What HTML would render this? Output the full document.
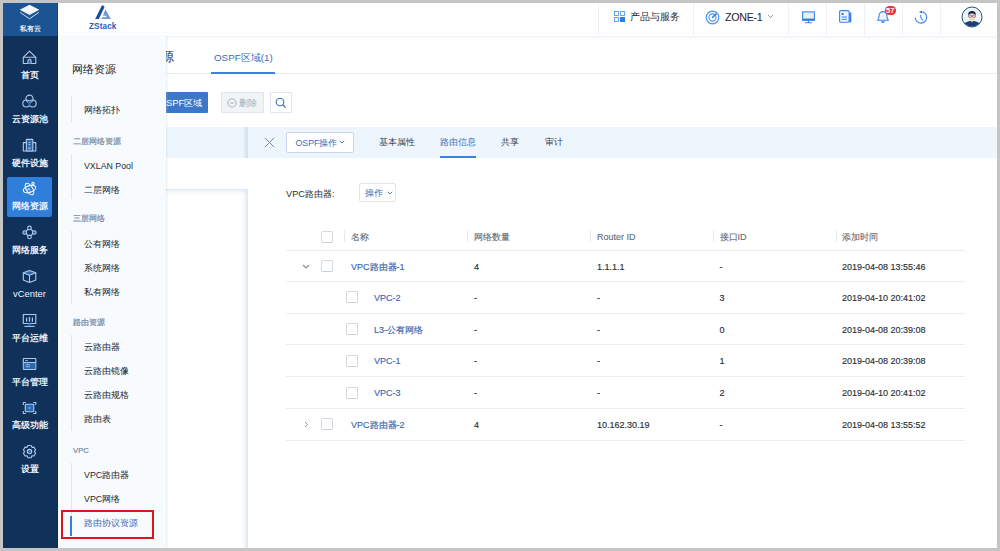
<!DOCTYPE html>
<html><head><meta charset="utf-8">
<style>
*{margin:0;padding:0;box-sizing:border-box}
html,body{width:1000px;height:551px;overflow:hidden;background:#c5c5c5;font-family:"Liberation Sans",sans-serif;font-weight:500}
.a{position:absolute}
.t{position:absolute;white-space:nowrap;line-height:12px;height:12px}
#frame{position:absolute;left:3px;top:3px;width:994px;height:545px;background:#fff;overflow:hidden}
/* all children of frame positioned relative to page via offset wrapper */
#pg{position:absolute;left:-3px;top:-3px;width:1000px;height:551px}
.sep{position:absolute;top:3px;width:1px;height:32px;background:#eef2f7}
.sb{position:absolute;left:2px;width:55px;font-weight:700;text-align:center;color:#e6eef8;font-size:8.6px;line-height:10px;height:10px}
.ico{position:absolute}
.fl{position:absolute;left:84px;font-size:9.2px;color:#232a35;line-height:12px;height:12px;white-space:nowrap}
.fg{position:absolute;left:73px;font-size:7.7px;color:#7588a0;-webkit-text-stroke:0.2px currentColor;margin-top:0.5px;line-height:10px;height:10px;white-space:nowrap}
.vl{position:absolute;left:71px;width:1px;background:#dfe6ee}
.hl{position:absolute;left:286px;width:679px;height:1px;background:#e9eef3}
.cb{position:absolute;width:12px;height:12px;border:1px solid #d3d9e0;border-bottom-color:#c9cfd7;border-radius:2px;background:#fff}
.th{position:absolute;font-size:9px;color:#626a75;-webkit-text-stroke:0.1px currentColor;line-height:12px;height:12px;white-space:nowrap}
.td{position:absolute;font-size:9px;color:#2b2f36;-webkit-text-stroke:0.15px currentColor;line-height:12px;height:12px;white-space:nowrap}
.lk{color:#3a68b0}
.csep{position:absolute;top:230px;width:1px;height:12px;background:#e3e8ee}
</style></head><body>
<div id="frame"><div id="pg">

<!-- header -->
<div class="a" style="left:58px;top:3px;width:942px;height:34px;background:#fff;border-bottom:1px solid #f1f3f6;box-shadow:0 1px 3px rgba(215,222,232,.3)"></div>
<div class="a" style="left:58px;top:31.5px;width:942px;height:1px;background:#fafbfc"></div>


<!-- logo -->
<svg class="a" style="left:94px;top:4px" width="18" height="16" viewBox="94 4 18 16">
 <path d="M101.1 6.9 C101.5 5.3 103.6 5 104.4 6.4 L104.3 7.4 L98.9 19.1 L95.2 19.1 Z" fill="#1a4f9c"/>
 <path d="M105.4 9.3 L110.9 19.1 L101.4 19.1 L102.2 17.2 L106.3 17.2 L106.3 15.8 L102.9 15.8 Z" fill="#6d9bd6"/>
</svg>
<div class="t" style="left:89px;top:20.5px;font-size:8.2px;font-weight:bold;color:#2360ac;letter-spacing:0.1px">ZStack</div>

<div class="sep" style="left:598px"></div>
<div class="sep" style="left:693px"></div>
<div class="sep" style="left:788px"></div>
<div class="sep" style="left:826px"></div>
<div class="sep" style="left:864px"></div>
<div class="sep" style="left:902px"></div>
<div class="sep" style="left:940px"></div>

<!-- products icon -->
<svg class="a" style="left:614px;top:11px" width="11" height="11" viewBox="0 0 11 11">
 <rect x="0.5" y="0.5" width="4" height="4" fill="none" stroke="#5b9be9" stroke-width="0.9"/>
 <rect x="6.5" y="0.5" width="4" height="4" fill="none" stroke="#5b9be9" stroke-width="0.9"/>
 <rect x="0.5" y="6.5" width="4" height="4" fill="none" stroke="#5b9be9" stroke-width="0.9"/>
 <rect x="6" y="6" width="5" height="5" fill="#2f7be0"/>
</svg>
<div class="t" style="left:630px;top:11px;font-size:10px;color:#2b2f36">产品与服务</div>
<!-- zone icon -->
<svg class="a" style="left:705px;top:9.5px" width="15" height="15" viewBox="0 0 15 15">
 <circle cx="7.5" cy="7.5" r="6.3" fill="none" stroke="#4a93ec" stroke-width="1.2"/>
 <circle cx="7.5" cy="7.5" r="3.6" fill="none" stroke="#4a93ec" stroke-width="1.1"/>
 <path d="M7.5 7.5 L11 4" stroke="#2f7be0" stroke-width="1.6" stroke-linecap="round"/>
</svg>
<div class="t" style="left:725px;top:10.5px;font-size:10.7px;letter-spacing:-0.3px;color:#1f2329">ZONE-1</div>
<svg class="a" style="left:767px;top:14px" width="7" height="5" viewBox="0 0 7 5"><path d="M1 1 L3.5 3.5 L6 1" fill="none" stroke="#8a929c" stroke-width="0.9"/></svg>
<!-- monitor -->
<svg class="a" style="left:801.5px;top:10.5px" width="13" height="13" viewBox="0 0 13 13">
 <rect x="0.6" y="0.9" width="11.8" height="8.4" fill="#e6f0fc" stroke="#3d86e6" stroke-width="1.1"/>
 <rect x="0.6" y="7.6" width="11.8" height="1.8" fill="#2f7be0"/>
 <path d="M6.5 9.5 V11.6 M3 11.8 H10" stroke="#3d86e6" stroke-width="1.1"/>
</svg>
<!-- doc -->
<svg class="a" style="left:839px;top:10px" width="13" height="13" viewBox="0 0 13 13">
 <rect x="0.6" y="0.6" width="9.5" height="11.6" rx="1" fill="#eef4fd" stroke="#3d86e6" stroke-width="1.1"/>
 <rect x="10.3" y="2.5" width="2" height="9.8" fill="#2f7be0"/>
 <rect x="2.6" y="3" width="2" height="2" fill="#2f7be0"/>
 <path d="M2.6 7 H8 M2.6 9.3 H8" stroke="#3d86e6" stroke-width="1"/>
</svg>
<!-- bell -->
<svg class="a" style="left:875px;top:9px" width="16" height="16" viewBox="875 9 16 16">
 <path d="M877.4 20.3 C878.8 19.4 879 18.2 879 16.2 C879 13.4 880.7 11.6 883 11.6 C885.3 11.6 887 13.4 887 16.2 C887 18.2 887.2 19.4 888.6 20.3 Z" fill="#eef4fd" stroke="#3d86e6" stroke-width="1.1" stroke-linejoin="round"/>
 <path d="M881.2 21.2 A1.8 1.8 0 0 0 884.8 21.2 Z" fill="#2f7be0"/>
</svg>
<div class="a" style="left:884.5px;top:6.2px;width:11.5px;height:8.6px;border-radius:4.3px;background:#e8343b;color:#fff;font-size:7.5px;font-weight:bold;line-height:9px;text-align:center">57</div>
<!-- clock -->
<svg class="a" style="left:913px;top:9px" width="16" height="16" viewBox="913 9 16 16">
 <path d="M921.2 11.7 A5.7 5.7 0 1 1 915.3 17.4" fill="none" stroke="#3d86e6" stroke-width="1.1"/>
 <path d="M922 10.5 L918.9 12 L922 13.5 Z" fill="#2f7be0"/>
 <path d="M920.6 15.3 L921.1 18.3 L922.8 19.8" fill="none" stroke="#3d86e6" stroke-width="1.1" stroke-linecap="round"/>
</svg>
<!-- avatar -->
<svg class="a" style="left:961px;top:5.6px" width="22" height="22" viewBox="0 0 22 22">
 <defs><clipPath id="cc"><circle cx="11" cy="11" r="9.6"/></clipPath></defs>
 <circle cx="11" cy="11" r="10" fill="#eef5fc" stroke="#234e86" stroke-width="1"/>
 <g clip-path="url(#cc)">
  <path d="M2 22 C2.5 16.5 6 15 11 15 C16 15 19.5 16.5 20 22 Z" fill="#1b3f73"/>
  <path d="M9 14 L11 16.5 L13 14 Z" fill="#f2d3b8"/>
  <ellipse cx="11" cy="10.5" rx="3.6" ry="4.2" fill="#f5dcc6"/>
  <path d="M7.2 9.5 C7 6 8.5 5 11 5 C13.5 5 15 6 14.8 9.5 C14 8 12 7.5 11 7.6 C9.5 7.6 8 8 7.2 9.5 Z" fill="#16294a"/>
  <rect x="7.6" y="9.2" width="3" height="2" rx="0.6" fill="none" stroke="#556" stroke-width="0.6"/>
  <rect x="11.4" y="9.2" width="3" height="2" rx="0.6" fill="none" stroke="#556" stroke-width="0.6"/>
 </g>
</svg>


<div class="a" style="left:3px;top:3px;width:55px;height:545px;background:#10325a"></div>
<div class="a" style="left:3px;top:3px;width:55px;height:33px;background:#1c5392"></div>
<div class="a" style="left:57px;top:3px;width:1px;height:33px;background:#0d4590"></div>
<div class="a" style="left:57px;top:36px;width:1px;height:512px;background:#06254f"></div>
<svg class="a" style="left:19px;top:4px" width="22" height="16" viewBox="0 0 22 16">
 <path d="M10.5 0.7 L20.3 5.8 L10.5 10.9 L0.7 5.8 Z" fill="#f3f7fc"/>
 <path d="M1.2 8.4 L10.5 14.8 L19.8 8.4" fill="none" stroke="#e8eff8" stroke-width="0.9"/>
</svg>
<div class="sb" style="top:23.5px;font-size:7.4px;left:3px">私有云</div>

<div class="a" style="left:7px;top:177px;width:45px;height:40px;background:#2f7fda;border-radius:2px"></div>
<div class="sb" style="top:70.0px;font-size:8.8px;color:#eaf1fa">首页</div>
<div class="sb" style="top:113.8px;font-size:8.8px;color:#eaf1fa">云资源池</div>
<div class="sb" style="top:157.6px;font-size:8.8px;color:#eaf1fa">硬件设施</div>
<div class="sb" style="top:201.4px;font-size:8.8px;color:#eaf1fa">网络资源</div>
<div class="sb" style="top:245.2px;font-size:8.8px;color:#eaf1fa">网络服务</div>
<div class="sb" style="top:288.5px;font-size:9.4px;color:#eef4fb;font-weight:400">vCenter</div>
<div class="sb" style="top:332.8px;font-size:8.8px;color:#eaf1fa">平台运维</div>
<div class="sb" style="top:376.6px;font-size:8.8px;color:#eaf1fa">平台管理</div>
<div class="sb" style="top:420.4px;font-size:8.8px;color:#eaf1fa">高级功能</div>
<div class="sb" style="top:464.2px;font-size:8.8px;color:#eaf1fa">设置</div><svg class="a" style="left:3px;top:36px" width="55" height="512" viewBox="3 36 55 512" fill="none" stroke="#aecaea" stroke-width="1.1" stroke-linejoin="round">
 <!-- home -->
 <path d="M23.3 57.3 L29.5 51.2 L35.8 57.3"/>
 <rect x="23.3" y="57.3" width="12.5" height="6.2"/>
 <path d="M27.9 63.4 V60.9 A1.6 1.6 0 0 1 31.1 60.9 V63.4" fill="#2b66b0"/>
 <!-- pool -->
 <path d="M29.5 101.6 A3.5 3.5 0 0 1 27.4 100.6 A3.5 3.5 0 0 1 31.6 100.6 Z" fill="#2b66b0" stroke="none"/>
 <circle cx="29.5" cy="98.7" r="3.6"/>
 <circle cx="26.3" cy="103.5" r="3.5"/>
 <circle cx="32.7" cy="103.5" r="3.5"/>
 <path d="M27.3 100.4 Q29.5 101.5 31.7 100.4 L29.5 106.5 Z" fill="#2b66b0" stroke="none" opacity="0.9"/>
 <!-- hardware -->
 <path d="M26.3 142.6 H23.3 V151 H35.8 V142.6 H32.8"/>
 <rect x="26.3" y="139.4" width="6.5" height="11.6" rx="0.6" fill="#2b66b0"/>
 <path d="M28.4 142.6 H30.6 M28.4 144.6 H30.6" stroke-width="0.9"/>
 <circle cx="29.5" cy="148.3" r="0.9" stroke-width="0.9"/>
 <!-- atom (on active box) -->
 <g stroke="#f2f7ff" stroke-width="1.1">
 <ellipse cx="29.5" cy="189" rx="6.4" ry="3.3" transform="rotate(-18 29.5 189)"/>
 <ellipse cx="29.5" cy="189" rx="6.4" ry="3.1" transform="rotate(58 29.5 189)"/>
 <circle cx="33" cy="183.4" r="1.1"/>
 <path d="M27.6 190.5 L28.6 188 L30.2 190.5" stroke-width="0.8"/>
 </g>
 <!-- network service -->
 <path d="M29.5 227.9 L34.3 232.5 L29.5 236.9 L24.7 232.5 Z"/>
 <circle cx="29.5" cy="227.9" r="1.8" fill="#10325a"/>
 <circle cx="29.5" cy="236.9" r="1.8" fill="#10325a"/>
 <circle cx="24.7" cy="232.5" r="1.8" fill="#2b66b0"/>
 <circle cx="34.3" cy="232.5" r="1.8" fill="#2b66b0"/>
 <!-- cube -->
 <path d="M29.5 270.5 L35.8 272.8 L29.5 275.2 L23.3 272.8 Z" fill="#2b66b0"/>
 <path d="M23.3 272.8 V279.9 L29.5 282.4 L35.8 279.9 V272.8 M29.5 275.2 V282.4"/>
 <!-- ops monitor -->
 <rect x="23.3" y="314.5" width="12.5" height="9"/>
 <path d="M26.6 317.8 V321.8 M29.5 316.9 V321.8 M32.4 317.6 V321.8" stroke-width="1.2"/>
 <rect x="28" y="323.6" width="3" height="1.9" fill="#2b66b0" stroke="none"/>
 <path d="M24.4 326.4 H34.7"/>
 <!-- management -->
 <rect x="23.3" y="358.5" width="12.5" height="11" rx="0.6"/>
 <rect x="23.9" y="362.6" width="11.3" height="6.4" fill="#2b66b0" stroke="none"/>
 <path d="M23.3 362.5 H35.8"/>
 <path d="M25.2 360.5 H28 M25.5 364.7 H30 M25.5 366.7 H30" stroke-width="0.8"/>
 <!-- advanced -->
 <path d="M23.3 405 V402.5 H25.8 M33.3 402.5 H35.8 V405 M35.8 411 V413.5 H33.3 M25.8 413.5 H23.3 V411"/>
 <rect x="25.3" y="404.3" width="8.5" height="7.4" rx="0.6" fill="#2b66b0"/>
 <circle cx="29.5" cy="408" r="0.8" fill="#cfe0f5" stroke="none"/>
 <!-- gear -->
 <path d="M27.05 447.36 L27.87 445.51 L31.13 445.51 L31.95 447.36 L33.95 447.15 L35.59 449.97 L34.40 451.60 L35.59 453.23 L33.95 456.05 L31.95 455.84 L31.13 457.69 L27.87 457.69 L27.05 455.84 L25.05 456.05 L23.41 453.23 L24.60 451.60 L23.41 449.97 L25.05 447.15 Z"/>
 <circle cx="29.5" cy="451.6" r="2.2" fill="#2b66b0"/>
</svg>

<!-- tab row -->
<div class="a" style="left:58px;top:73px;width:939px;height:1px;background:#e8edf2"></div>
<div class="t" style="left:96px;top:50px;font-size:13px;line-height:14px;height:14px;color:#1f2329">路由协议资源</div>
<div class="t" style="left:214px;top:52px;font-size:9.8px;color:#3a6cb8">OSPF区域(1)</div>
<div class="a" style="left:211px;top:71.5px;width:64px;height:2px;background:#3b82e0"></div>
<!-- buttons -->
<div class="a" style="left:120px;top:92px;width:88px;height:21px;background:#3d77c7;border-radius:1px"></div>
<div class="t" style="left:140.8px;top:96.5px;font-size:9.4px;font-weight:500;color:#fff">创建OSPF区域</div>
<div class="a" style="left:221px;top:92px;width:43px;height:21px;background:#f1f4f7;border:1px solid #e1e6ec;border-radius:1px"></div>
<svg class="a" style="left:227px;top:97.5px" width="10" height="10" viewBox="0 0 10 10"><circle cx="5" cy="5" r="4.2" fill="none" stroke="#a4adb8" stroke-width="0.9"/><path d="M3 5 H7" stroke="#a4adb8" stroke-width="0.9"/></svg>
<div class="t" style="left:239px;top:96.5px;font-size:9px;color:#a4adb8">删除</div>
<div class="a" style="left:270px;top:92px;width:22px;height:21px;background:#fff;border:1px solid #e1e6ec;border-radius:1px"></div>
<svg class="a" style="left:275px;top:96.5px" width="12" height="12" viewBox="0 0 12 12"><circle cx="5" cy="5" r="3.8" fill="none" stroke="#3a6cb8" stroke-width="1.1"/><path d="M7.8 7.8 L10.6 10.6" stroke="#3a6cb8" stroke-width="1.3"/></svg>
<!-- list header bar -->
<div class="a" style="left:58px;top:127px;width:939px;height:31px;background:#eef6fd"></div>
<div class="a" style="left:58px;top:189px;width:189px;height:359px;background:#fff;border-top:1px solid #dfe8f1;box-shadow:inset -4px 3px 4px -2px rgba(215,228,240,.8)"></div>


<!-- detail panel -->
<div class="a" style="left:247px;top:127px;width:750px;height:421px;background:#fff;"></div>
<div class="a" style="left:247px;top:127px;width:750px;height:31px;background:#eef6fd"></div>
<div class="a" style="left:243px;top:127px;width:4px;height:31px;background:linear-gradient(to right,rgba(220,232,243,0),rgba(205,222,238,.9))"></div>
<div class="a" style="left:247px;top:127px;width:1px;height:31px;background:#d6e3ef"></div>
<div class="a" style="left:247px;top:189px;width:1px;height:359px;background:#dfe7f0"></div>
<svg class="a" style="left:263.5px;top:136.5px" width="11" height="11" viewBox="0 0 11 11"><path d="M0.8 0.8 L10.2 10.2 M10.2 0.8 L0.8 10.2" stroke="#7d8794" stroke-width="1"/></svg>
<div class="a" style="left:286px;top:132px;width:68px;height:21px;background:#fff;border:1px solid #c9d7e8;border-radius:2px"></div>
<div class="t" style="left:295.5px;top:136.5px;font-size:8.8px;color:#3a6cb8">OSPF操作</div>
<svg class="a" style="left:339px;top:140px" width="6" height="4" viewBox="0 0 6 4"><path d="M0.8 0.8 L3 3 L5.2 0.8" fill="none" stroke="#3a6cb8" stroke-width="0.9"/></svg>
<div class="t" style="left:379px;top:136px;font-size:9px;color:#3d434b">基本属性</div>
<div class="t" style="left:440px;top:136px;font-size:9px;color:#3a6cb8">路由信息</div>
<div class="a" style="left:440px;top:156px;width:36px;height:2px;background:#3b82e0"></div>
<div class="t" style="left:501px;top:136px;font-size:9px;color:#3d434b">共享</div>
<div class="t" style="left:545px;top:136px;font-size:9px;color:#3d434b">审计</div>

<div class="t" style="left:286px;top:188px;font-size:9.2px;color:#2b2f36">VPC路由器:</div>
<div class="a" style="left:359px;top:183px;width:37px;height:19px;background:#fff;border:1px solid #dfe6ee;border-radius:2px"></div>
<div class="t" style="left:365px;top:187px;font-size:9.2px;color:#3a6cb8">操作</div>
<svg class="a" style="left:386.5px;top:191px" width="6" height="4" viewBox="0 0 6 4"><path d="M0.8 0.8 L3 3 L5.2 0.8" fill="none" stroke="#3a6cb8" stroke-width="0.9"/></svg>

<div class="cb" style="left:321px;top:230.5px"></div>
<div class="csep" style="left:344px"></div>
<div class="csep" style="left:467px"></div>
<div class="csep" style="left:590px"></div>
<div class="csep" style="left:713px"></div>
<div class="csep" style="left:836px"></div>
<div class="th" style="left:351px;top:230.5px">名称</div>
<div class="th" style="left:474px;top:230.5px">网络数量</div>
<div class="th" style="left:597px;top:230.5px">Router ID</div>
<div class="th" style="left:719.5px;top:230.5px">接口ID</div>
<div class="th" style="left:842px;top:230.5px">添加时间</div>
<div class="hl" style="top:250.0px"></div>
<div class="hl" style="top:281.2px"></div>
<div class="hl" style="top:312.6px"></div>
<div class="hl" style="top:344.0px"></div>
<div class="hl" style="top:376.0px"></div>
<div class="hl" style="top:408.0px"></div>
<div class="hl" style="top:439.9px"></div>
<div class="cb" style="left:321px;top:260.1px"></div>
<div class="td lk" style="left:351px;top:260.9px">VPC路由器-1</div>
<svg class="a" style="left:302px;top:264.1px" width="8" height="5" viewBox="0 0 8 5"><path d="M1 1 L4 4 L7 1" fill="none" stroke="#868e99" stroke-width="1.1"/></svg>
<div class="td" style="left:474px;top:260.9px">4</div>
<div class="td" style="left:597px;top:260.9px">1.1.1.1</div>
<div class="td" style="left:719.5px;top:260.9px">-</div>
<div class="td" style="left:842px;top:260.9px">2019-04-08 13:55:46</div>
<div class="cb" style="left:346px;top:291.4px"></div>
<div class="td lk" style="left:374px;top:292.2px">VPC-2</div>
<div class="td" style="left:474px;top:292.2px">-</div>
<div class="td" style="left:597px;top:292.2px">-</div>
<div class="td" style="left:719.5px;top:292.2px">3</div>
<div class="td" style="left:842px;top:292.2px">2019-04-10 20:41:02</div>
<div class="cb" style="left:346px;top:322.8px"></div>
<div class="td lk" style="left:374px;top:323.6px">L3-公有网络</div>
<div class="td" style="left:474px;top:323.6px">-</div>
<div class="td" style="left:597px;top:323.6px">-</div>
<div class="td" style="left:719.5px;top:323.6px">0</div>
<div class="td" style="left:842px;top:323.6px">2019-04-08 20:39:08</div>
<div class="cb" style="left:346px;top:354.5px"></div>
<div class="td lk" style="left:374px;top:355.3px">VPC-1</div>
<div class="td" style="left:474px;top:355.3px">-</div>
<div class="td" style="left:597px;top:355.3px">-</div>
<div class="td" style="left:719.5px;top:355.3px">1</div>
<div class="td" style="left:842px;top:355.3px">2019-04-08 20:39:08</div>
<div class="cb" style="left:346px;top:386.5px"></div>
<div class="td lk" style="left:374px;top:387.3px">VPC-3</div>
<div class="td" style="left:474px;top:387.3px">-</div>
<div class="td" style="left:597px;top:387.3px">-</div>
<div class="td" style="left:719.5px;top:387.3px">2</div>
<div class="td" style="left:842px;top:387.3px">2019-04-10 20:41:02</div>
<div class="cb" style="left:321px;top:418.4px"></div>
<div class="td lk" style="left:351px;top:419.2px">VPC路由器-2</div>
<svg class="a" style="left:304px;top:420.9px" width="5" height="7" viewBox="0 0 5 7"><path d="M1 1 L3.5 3.5 L1 6" fill="none" stroke="#7d8794" stroke-width="0.9"/></svg>
<div class="td" style="left:474px;top:419.2px">4</div>
<div class="td" style="left:597px;top:419.2px">10.162.30.19</div>
<div class="td" style="left:719.5px;top:419.2px">-</div>
<div class="td" style="left:842px;top:419.2px">2019-04-08 13:55:52</div>
<div class="a" style="left:58px;top:36px;width:108px;height:512px;background:#f7fbfe;box-shadow:1px 0 2px rgba(180,195,215,.35)"></div>
<div class="a" style="left:58px;top:36px;width:2px;height:512px;background:#fdfeff"></div>
<div class="t" style="left:72px;top:63px;font-size:11.2px;color:#1f2329">网络资源</div>

<div class="vl" style="top:96.3px;height:25.4px"></div>
<div class="fl" style="top:103.7px;">网络拓扑</div>
<div class="fg" style="top:136px">二层网络资源</div>
<div class="vl" style="top:153.6px;height:45.6px"></div>
<div class="fl" style="top:159.9px;color:#232a35;font-size:8.8px">VXLAN Pool</div>
<div class="fl" style="top:183.9px;">二层网络</div>
<div class="fg" style="top:213.6px">三层网络</div>
<div class="vl" style="top:231px;height:72.5px"></div>
<div class="fl" style="top:237.5px;">公有网络</div>
<div class="fl" style="top:261.5px;">系统网络</div>
<div class="fl" style="top:285.5px;">私有网络</div>
<div class="fg" style="top:317.4px">路由资源</div>
<div class="vl" style="top:335px;height:95.5px"></div>
<div class="fl" style="top:341.3px;">云路由器</div>
<div class="fl" style="top:365.3px;">云路由镜像</div>
<div class="fl" style="top:389.3px;">云路由规格</div>
<div class="fl" style="top:413.3px;">路由表</div>
<div class="fg" style="top:445.5px">VPC</div>
<div class="vl" style="top:463px;height:72.5px"></div>
<div class="fl" style="top:469.4px;font-size:8.9px">VPC路由器</div>
<div class="fl" style="top:493.4px;font-size:8.9px">VPC网络</div>
<div class="fl" style="top:517.4px;color:#3a6cc0">路由协议资源</div>
<div class="a" style="left:70px;top:515.5px;width:2px;height:20px;background:#3b7fdc"></div>
<div class="a" style="left:61px;top:509.5px;width:93px;height:29px;border:2px solid #e0141c"></div>
</div></div>
</body></html>
